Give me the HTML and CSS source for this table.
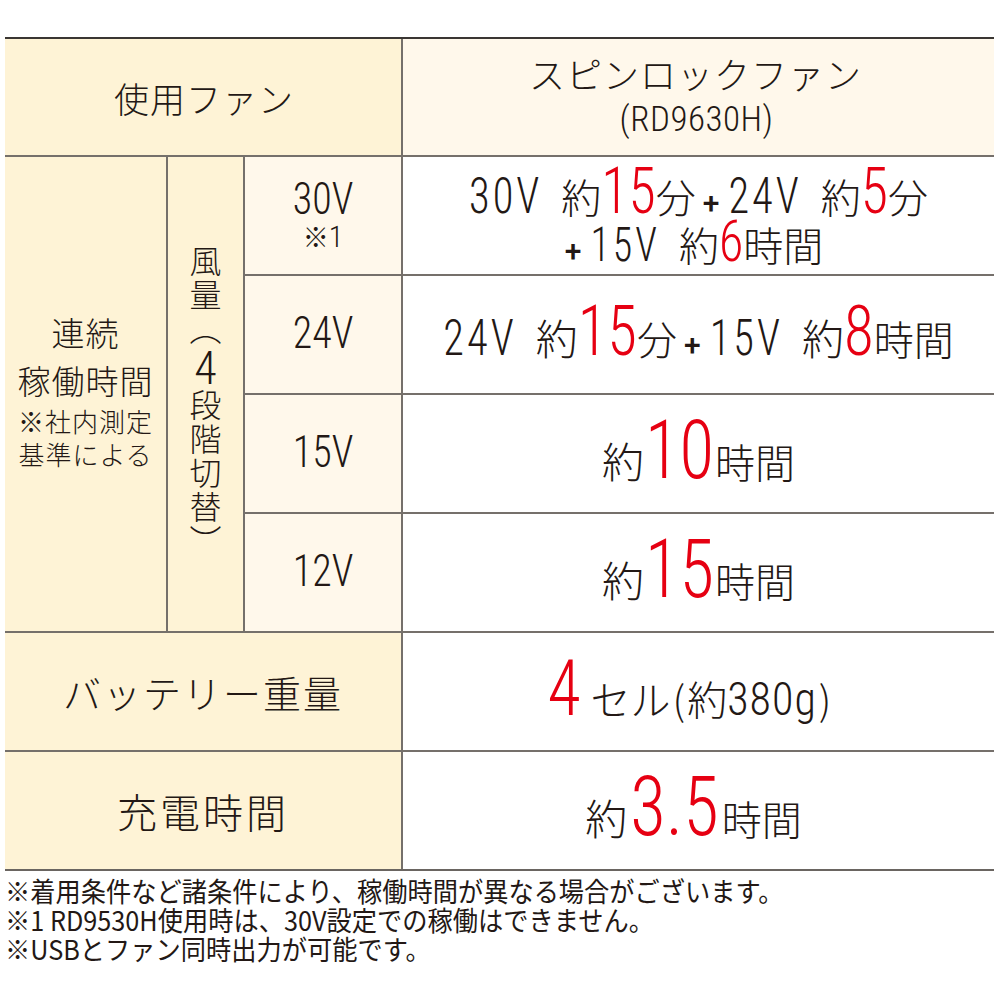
FILE: index.html
```html
<!DOCTYPE html>
<html lang="ja">
<head>
<meta charset="utf-8">
<title>スピンロックファン 仕様</title>
<link rel="stylesheet" href="styles.css">
</head>
<body>
<div class="page">
  <div class="spec">
    <div class="cell head wide"><span class="lbl-fan">使用ファン</span></div>
    <div class="cell light model">
      <div class="model-name">スピンロックファン</div>
      <div class="model-code">(RD9630H)</div>
    </div>

    <div class="cell head runtime">
      <div class="rt-main">連続</div>
      <div class="rt-main">稼働時間</div>
      <div class="rt-note">※社内測定</div>
      <div class="rt-note">基準による</div>
    </div>
    <div class="cell head airflow">
      <span class="vert">風量（<span class="vnum">4</span>段階切替）</span>
    </div>

    <div class="cell light volt">
      <div class="volt-v">30V</div>
      <div class="volt-note"><span class="kome">※</span>1</div>
    </div>
    <div class="cell val">
      <div class="vline l1"><span class="n n50">30V</span><span class="k k40 sp">約</span><span class="r r64">15</span><span class="k k40">分</span><span class="plus">+</span><span class="n n50">24V</span><span class="k k40 sp">約</span><span class="r r64">5</span><span class="k k40">分</span></div>
      <div class="vline l2"><span class="plus">+</span><span class="n n46">15V</span><span class="k k40 sp">約</span><span class="r r56">6</span><span class="k k40">時間</span></div>
    </div>

    <div class="cell light volt"><div class="volt-v">24V</div></div>
    <div class="cell val">
      <div class="vline"><span class="n n50">24V</span><span class="k k42 sp">約</span><span class="r r70">15</span><span class="k k40">分</span><span class="plus">+</span><span class="n n50">15V</span><span class="k k42 sp">約</span><span class="r r70">8</span><span class="k k40">時間</span></div>
    </div>

    <div class="cell light volt"><div class="volt-v">15V</div></div>
    <div class="cell val">
      <div class="vline"><span class="k k42">約</span><span class="r r82 sp2">10</span><span class="k k40">時間</span></div>
    </div>

    <div class="cell light volt"><div class="volt-v">12V</div></div>
    <div class="cell val">
      <div class="vline"><span class="k k42">約</span><span class="r r82 sp2">15</span><span class="k k40">時間</span></div>
    </div>

    <div class="cell head wide"><span class="lbl-big">バッテリー重量</span></div>
    <div class="cell val">
      <div class="vline battery"><span class="r r78 cell4">4</span><span class="k k40">セル</span><span class="k k40 paren">(</span><span class="k k40">約</span><span class="g380">380g</span><span class="k k40 paren">)</span></div>
    </div>

    <div class="cell head wide"><span class="lbl-big lbl-charge">充電時間</span></div>
    <div class="cell val">
      <div class="vline charge"><span class="k k42">約</span><span class="r r84 sp3">3.5</span><span class="k k40">時間</span></div>
    </div>
  </div>

  <div class="notes">
    <div class="note">※着用条件など諸条件により、稼働時間が異なる場合がございます。</div>
    <div class="note">※1 RD9530H使用時は、30V設定での稼働はできません。</div>
    <div class="note">※USBとファン同時出力が可能です。</div>
  </div>
</div>
</body>
</html>
```
FILE: styles.css
```css
html, body {
  margin: 0;
  padding: 0;
  background: #ffffff;
}

body {
  color: #231815;
  font-family: "Noto Sans CJK JP", "Noto Sans", sans-serif;
}

.page {
  padding: 37px 6px 0 5px;
}

.spec {
  display: grid;
  grid-template-columns: 161px 75px 156px 591px;
  grid-template-rows: 116px repeat(6, 117px);
  gap: 2px;
  background: #75706b;
  border-top: 2px solid #3a3633;
  border-bottom: 2px solid #6a6561;
}

.cell {
  display: flex;
  flex-direction: column;
  align-items: center;
  justify-content: center;
  background: #ffffff;
  white-space: nowrap;
}

.head {
  background: #fef3d6;
  font-weight: 300;
}

.light {
  background: #fff8eb;
}

.wide {
  grid-column: 1 / span 3;
}

.val {
  background: #ffffff;
}

/* header row */
.lbl-fan {
  font-size: 35px;
  letter-spacing: 1px;
  line-height: 1;
  padding-left: 2px;
}

.model {
  padding-top: 4px;
}

.model-name {
  font-size: 36px;
  font-weight: 300;
  line-height: 40px;
  letter-spacing: 1px;
  margin-top: -4px;
  padding-right: 6px;
}

.model-code {
  font-family: Roboto, sans-serif;
  font-stretch: 75%;
  font-weight: 300;
  font-size: 35px;
  line-height: 44px;
  letter-spacing: 0.5px;
  padding-top: 5px;
  padding-right: 4px;
}

/* runtime label column */
.runtime {
  grid-column: 1;
  grid-row: 2 / span 4;
  padding-bottom: 10px;
}

.rt-main {
  font-size: 33px;
  line-height: 48px;
  letter-spacing: 1px;
}

.rt-note {
  font-size: 26px;
  line-height: 33px;
  letter-spacing: 1px;
}

.airflow {
  grid-column: 2;
  grid-row: 2 / span 4;
  padding-top: 16px;
}

.vert {
  writing-mode: vertical-rl;
  font-size: 32px;
  line-height: 1;
  letter-spacing: 2px;
}

.vnum {
  display: inline-block;
  writing-mode: horizontal-tb;
  font-family: Roboto, sans-serif;
  font-stretch: 75%;
  font-weight: 300;
  font-size: 46px;
  line-height: 42px;
  height: 42px;
  letter-spacing: 0;
}

/* voltage column */
.volt {
  grid-column: 3;
}

.volt-v {
  font-family: Roboto, sans-serif;
  font-stretch: 75%;
  font-weight: 300;
  font-size: 40px;
  line-height: 46px;
  transform: scaleY(1.13);
  margin-top: -4px;
}

.volt-note {
  font-family: Roboto, sans-serif;
  font-stretch: 75%;
  font-weight: 300;
  font-size: 30px;
  line-height: 28px;
}

.kome {
  font-family: "Noto Sans CJK JP", sans-serif;
  font-size: 26px;
}

/* value cells */
.vline {
  display: flex;
  align-items: baseline;
  justify-content: center;
  line-height: 1;
}

.l1 {
  height: 53px;
  padding-top: 6px;
}

.l2 {
  height: 53px;
  padding-right: 16px;
}

.battery {
  padding-right: 16px;
}

.charge {
  padding-right: 10px;
}

.n {
  font-family: Roboto, sans-serif;
  font-stretch: 75%;
  font-weight: 340;
  letter-spacing: 3px;
  transform: scaleY(1.18);
  transform-origin: 50% 84%;
}

.r {
  font-family: Roboto, sans-serif;
  font-stretch: 75%;
  font-weight: 360;
  color: #e60012;
  transform: scaleY(1.15);
  transform-origin: 50% 84%;
}

.k {
  font-family: "Noto Sans CJK JP", sans-serif;
  font-weight: 300;
}

.n46 { font-size: 40px; }
.n50 { font-size: 42.5px; }

.k38 { font-size: 38px; }
.k40 { font-size: 40px; }
.k42 { font-size: 42px; }

.r56 { font-size: 50px; }
.r64 { font-size: 56px; }
.r70 { font-size: 61px; }
.r78 { font-size: 68px; }
.r82 { font-size: 71px; }
.r84 { font-size: 73px; }

.sp { margin-left: 19px; }
.sp2 { margin: 0 1px; }
.sp3 { margin: 0 3px; }

.plus {
  font-family: Roboto, sans-serif;
  font-weight: 500;
  font-size: 30px;
  margin: 0 9px 0 7px;
}

.cell4 { margin-right: 10px; }

.paren {
  font-weight: 300;
  margin: 0 2px;
}

.g380 {
  font-family: Roboto, sans-serif;
  font-stretch: 75%;
  font-weight: 300;
  font-size: 44px;
  letter-spacing: 1px;
  transform: scaleY(1.05);
  transform-origin: 50% 84%;
}

/* bottom labels */
.lbl-big {
  font-size: 38px;
  letter-spacing: 2px;
  line-height: 1;
}

.lbl-charge {
  font-size: 40px;
  letter-spacing: 3px;
}

/* footnotes */
.notes {
  margin-top: 5px;
}

.note {
  font-size: 27px;
  line-height: 29px;
  white-space: nowrap;
  transform: scaleX(0.935);
  transform-origin: left center;
}
```
